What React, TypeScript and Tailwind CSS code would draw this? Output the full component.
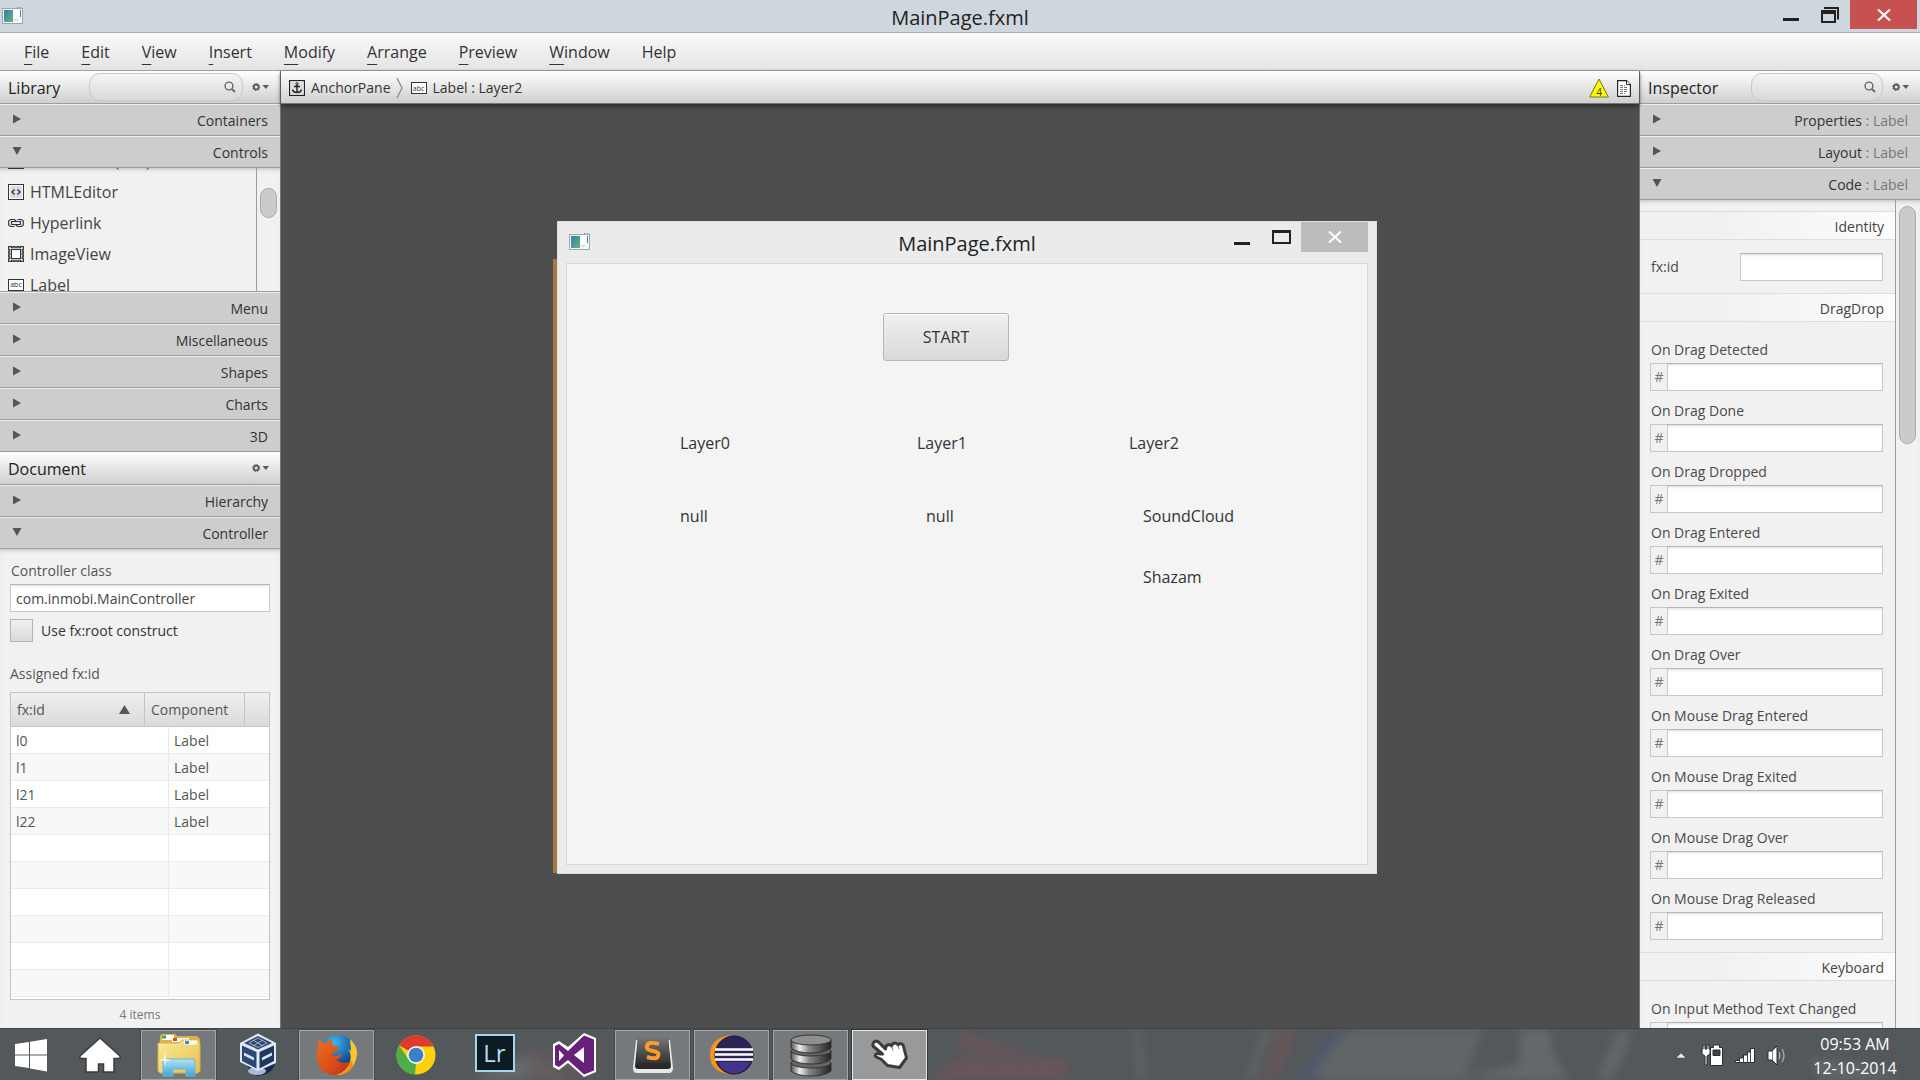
import type { ReactNode } from "react";

function AppIcon() {
  return (
    <svg width="21" height="17" viewBox="0 0 21 17" aria-hidden="true">
      <defs>
        <linearGradient id="appPane" x1="0" y1="0" x2="1" y2="1">
          <stop offset="0" stopColor="#3d7ab0" />
          <stop offset="1" stopColor="#5cb977" />
        </linearGradient>
      </defs>
      <rect x="0.5" y="1.5" width="20" height="15" fill="#f4f6f7" stroke="#9aa5ad" />
      <rect x="2" y="3" width="9" height="12" fill="url(#appPane)" />
      <rect x="12" y="3" width="5" height="8" fill="#fff" />
      <rect x="12" y="12" width="4" height="2" fill="#dde2e5" />
      <rect x="18" y="3" width="1" height="7" fill="#3d8fa5" />
      <path d="M15 0.5h1.5M18 0.5h1.5" stroke="#8b969e" />
    </svg>
  );
}

function SearchIcon() {
  return (
    <svg width="12" height="12" viewBox="0 0 12 12" fill="none" stroke="#666" strokeWidth="1.4" aria-hidden="true">
      <circle cx="5" cy="5" r="3.9" />
      <path d="M7.8 7.8L11 11" strokeWidth="1.8" />
    </svg>
  );
}

function GearMenu({ label }: { label: string }) {
  return (
    <button type="button" aria-label={label} className="flex h-4 w-[17px] shrink-0 items-center">
      <svg width="17" height="10" viewBox="0 0 17 10" aria-hidden="true">
        <circle cx="4.2" cy="5" r="2.4" fill="none" stroke="#5a5a5a" strokeWidth="1.8" />
        <circle cx="4.2" cy="5" r="3.6" fill="none" stroke="#5a5a5a" strokeWidth="1" strokeDasharray="1.4 1.43" />
        <path d="M10.5 3h6.5l-3.2 4z" fill="#5a5a5a" />
      </svg>
    </button>
  );
}

function HtmlIcon() {
  return (
    <svg width="16" height="16" viewBox="0 0 16 16" fill="none" aria-hidden="true">
      <rect x="0.5" y="0.5" width="15" height="15" fill="#fff" stroke="#333" />
      <rect x="2" y="2" width="12" height="12" fill="#dcdcdc" />
      <path d="M6.5 5.5L4 8l2.500 2.500M9.500 5.500L12 8l-2.500 2.500" stroke="#333" strokeWidth="1.300" />
    </svg>
  );
}

function LinkIcon() {
  return (
    <svg width="16" height="16" viewBox="0 0 16 16" fill="none" stroke="#333" strokeWidth="1.200" aria-hidden="true">
      <path d="M6.500 11.500H2.500L.7 10V6l1.800-1.500h4L8 6M9.500 4.500h4L15.300 6v4l-1.800 1.500h-4L8 10" fill="#fff" />
      <rect x="3.500" y="6.500" width="9" height="3" fill="#fff" />
    </svg>
  );
}

function ImageIcon() {
  return (
    <svg width="16" height="16" viewBox="0 0 16 16" fill="none" stroke="#333" aria-hidden="true">
      <path
        d="M.6.6h3v1.200h1.600V.6h1.900v1.200h1.800V.6h1.900v1.200h1.600V.6h3v3h-1.200v1.600h1.200v1.900h-1.200v1.800h1.200v1.900h-1.200v1.600h1.200v3h-3v-1.200h-1.600v1.200H8.900v-1.200H7.100v1.200H5.200v-1.200H3.600v1.200h-3v-3h1.200v-1.600H.6V8.900h1.200V7.100H.6V5.200h1.200V3.600H.6z"
        strokeWidth="1.100"
      />
      <rect x="3.500" y="3.500" width="9" height="9" fill="#fff" />
    </svg>
  );
}

function AbcIcon() {
  return (
    <span
      aria-hidden="true"
      className="flex h-3 w-4 shrink-0 items-center justify-center border border-[#333] bg-white text-[7px] leading-none text-[#333]"
    >
      abc
    </span>
  );
}

function AnchorIcon() {
  return (
    <svg width="16" height="16" viewBox="0 0 16 16" fill="none" stroke="#222" aria-hidden="true">
      <rect x="0.600" y="0.600" width="14.800" height="14.800" fill="#fff" strokeWidth="1.200" />
      <rect x="2" y="2" width="12" height="12" fill="#ddd" stroke="none" />
      <circle cx="8" cy="3.800" r="1.100" />
      <path d="M8 5v7.500M5 6.500h6M3.500 9.500c.5 2 2.500 3 4.500 3s4-1 4.500-3" strokeWidth="1.400" />
    </svg>
  );
}

function Arrow({ open }: { open?: boolean }) {
  return (
    <svg width="10" height="10" viewBox="0 0 10 10" fill="#555" aria-hidden="true" className="mb-1">
      {open ? <path d="M0.500 1h9L5 9z" /> : <path d="M1 .5L9 5 1 9.500z" />}
    </svg>
  );
}

function Section({ name, suffix, open }: { name: string; suffix?: string; open?: boolean }) {
  return (
    <button
      type="button"
      aria-expanded={!!open}
      className="flex h-8 w-full shrink-0 items-center justify-between border-t border-b border-t-[#ededed] border-b-[#9d9d9d] bg-[#cdcdcd] pt-[2px] pr-3 pl-3 text-sm text-[#333]"
    >
      <Arrow open={open} />
      <span>
        {name}
        {suffix && <span className="text-[#777]"> : {suffix}</span>}
      </span>
    </button>
  );
}

function PanelHeader({ title, search }: { title: string; search?: string }) {
  return (
    <div className="flex h-[33px] w-full shrink-0 items-center justify-between border-b border-[#9d9d9d] bg-linear-to-b from-white to-[#cfcfcf] pr-[11px] pl-2">
      <h2 className="pt-[2px] text-base text-[#222]">{title}</h2>
      <div className="flex items-center gap-[9px]">
        {search && (
          <label
            className={`flex h-7 items-center rounded-[11px] border border-[#c9c9c9] bg-linear-to-b from-[#f4f4f4] to-[#d9d9d9] pr-[6px] ${search}`}
          >
            <input type="text" aria-label={`Search ${title}`} className="w-full min-w-0 flex-1 bg-transparent px-3 text-sm outline-none" />
            <SearchIcon />
          </label>
        )}
        <GearMenu label={`${title} options`} />
      </div>
    </div>
  );
}

const field =
  "h-7 min-w-0 border border-[#c8c8c8] border-t-[#b5b5b5] bg-white px-[5px] text-sm text-[#444] shadow-[inset_0_3px_3px_-2px_#ddd] outline-none";

function LibraryItem({ name, icon }: { name: string; icon: ReactNode }) {
  return (
    <li className="flex h-[31px] shrink-0 items-center gap-[6px]">
      {icon}
      <span>{name}</span>
    </li>
  );
}

function LeftPanel() {
  const rows = ["l0", "l1", "l21", "l22", "", "", "", "", "", ""];
  return (
    <aside className="flex w-[281px] shrink-0 flex-col border-r border-[#777] bg-[#f1f1f1]">
      <PanelHeader title="Library" search="w-[154px]" />
      <Section name="Containers" />
      <Section name="Controls" open />
      <div className="flex h-[124px] shrink-0 overflow-hidden border-b border-[#9d9d9d] shadow-[inset_0_4px_4px_-3px_#bbb]">
        <ul className="-mt-[23px] flex flex-1 flex-col pl-2 text-base text-[#444]">
          <LibraryItem name="DatePicker  (FX8)" icon={<HtmlIcon />} />
          <LibraryItem name="HTMLEditor" icon={<HtmlIcon />} />
          <LibraryItem name="Hyperlink" icon={<LinkIcon />} />
          <LibraryItem name="ImageView" icon={<ImageIcon />} />
          <LibraryItem name="Label" icon={<AbcIcon />} />
        </ul>
        <div className="w-6 border-l border-[#9d9d9d] pt-5 pl-[3px]">
          <div className="h-[30px] w-[17px] rounded-full border border-[#aaa] bg-[#cbcbcb]" />
        </div>
      </div>
      <Section name="Menu" />
      <Section name="Miscellaneous" />
      <Section name="Shapes" />
      <Section name="Charts" />
      <Section name="3D" />
      <PanelHeader title="Document" />
      <Section name="Hierarchy" />
      <Section name="Controller" open />
      <div className="flex min-h-0 flex-1 flex-col px-[10px] pt-2 text-sm text-[#555] shadow-[inset_0_4px_4px_-3px_#bbb]">
        <label htmlFor="controller" className="pl-px leading-[27px]">
          Controller class
        </label>
        <input id="controller" type="text" defaultValue="com.inmobi.MainController" className={field} />
        <label className="mt-[7px] flex items-center gap-2 text-[#333]">
          <input
            type="checkbox"
            className="h-[23px] w-[23px] appearance-none border border-[#b5b5b5] bg-linear-to-b from-[#f0f0f0] to-[#dadada]"
          />
          Use fx:root construct
        </label>
        <h3 id="assigned" className="mt-5 leading-[23px]">
          Assigned fx:id
        </h3>
        <div className="mt-[7px] min-h-0 flex-1 overflow-hidden border border-[#c4c4c4] bg-white">
          <table aria-labelledby="assigned" className="w-full table-fixed border-separate border-spacing-0">
            <colgroup>
              <col className="w-[134px]" />
              <col className="w-6" />
              <col className="w-[76px]" />
              <col />
            </colgroup>
            <thead>
              <tr className="h-[34px] bg-linear-to-b from-[#f0f0f0] to-[#d9d9d9] text-left">
                <th scope="col" className="border-r border-b border-[#c4c4c4] pr-[14px] pl-[6px] font-normal">
                  <span className="flex items-center justify-between">
                    fx:id
                    <svg width="11" height="9" viewBox="0 0 11 9" fill="#555" aria-hidden="true">
                      <path d="M5.500 0L11 9H0z" />
                    </svg>
                  </span>
                </th>
                <th scope="col" colSpan={2} className="border-r border-b border-[#c4c4c4] pl-[6px] font-normal">
                  Component
                </th>
                <td className="border-b border-[#c4c4c4]" />
              </tr>
            </thead>
            <tbody>
              {rows.map((id, i) => (
                <tr key={i} className="h-[27px] odd:bg-white even:bg-[#f8f8f8]">
                  <td colSpan={2} className="border-r border-b border-[#ebebeb] pt-[2px] pl-[5px] leading-6">
                    {id}
                  </td>
                  <td colSpan={2} className="border-b border-[#ebebeb] pt-[2px] pl-[5px] leading-6">
                    {id && "Label"}
                  </td>
                </tr>
              ))}
            </tbody>
          </table>
        </div>
        <p className="flex h-[28px] items-center justify-center pt-[2px] text-xs text-[#777]">4 items</p>
      </div>
    </aside>
  );
}

function GroupTitle({ children }: { children: ReactNode }) {
  return (
    <h3 className="flex h-[29px] shrink-0 items-center justify-end border-t border-b border-[#dedede] bg-linear-to-r from-[#f1f1f1] from-30% to-[#fcfcfc] pt-[2px] pr-[11px] text-sm text-[#444]">
      {children}
    </h3>
  );
}

function HandlerField({ name }: { name: string }) {
  return (
    <label className="flex h-[61px] shrink-0 flex-col pr-3 pl-[10px] text-sm leading-[26px] text-[#4a4a4a]">
      <span className="h-[26px] pl-px">{name}</span>
      <span className="flex">
        <span className="flex h-7 w-[17px] items-center justify-center border border-r-0 border-[#c8c8c8] text-[#777]">#</span>
        <input type="text" className={`${field} flex-1`} />
      </span>
    </label>
  );
}

function Inspector() {
  const handlers = [
    "On Drag Detected",
    "On Drag Done",
    "On Drag Dropped",
    "On Drag Entered",
    "On Drag Exited",
    "On Drag Over",
    "On Mouse Drag Entered",
    "On Mouse Drag Exited",
    "On Mouse Drag Over",
    "On Mouse Drag Released",
  ];
  return (
    <aside className="flex w-[281px] shrink-0 flex-col border-l border-[#777] bg-[#f1f1f1]">
      <PanelHeader title="Inspector" search="w-[132px]" />
      <Section name="Properties" suffix="Label" />
      <Section name="Layout" suffix="Label" />
      <Section name="Code" suffix="Label" open />
      <div className="flex min-h-0 flex-1 shadow-[inset_0_4px_4px_-3px_#bbb]">
        <div className="flex flex-1 flex-col overflow-hidden pt-[11px]">
          <GroupTitle>Identity</GroupTitle>
          <label className="flex h-[53px] shrink-0 items-center justify-between pr-3 pl-[11px] text-sm text-[#4a4a4a]">
            fx:id
            <input type="text" className={`${field} w-[143px]`} />
          </label>
          <GroupTitle>DragDrop</GroupTitle>
          <div className="flex shrink-0 flex-col pt-[15px]">
            {handlers.map((h) => (
              <HandlerField key={h} name={h} />
            ))}
          </div>
          <div className="h-[5px] shrink-0" />
          <GroupTitle>Keyboard</GroupTitle>
          <div className="h-[15px] shrink-0" />
          <HandlerField name="On Input Method Text Changed" />
        </div>
        <div className="w-[25px] border-l border-[#9d9d9d] pt-[6px] pl-[3px]">
          <div className="h-[238px] w-[17px] rounded-full border border-[#aaa] bg-[#cbcbcb]" />
        </div>
      </div>
    </aside>
  );
}

function Preview() {
  // Nodes of the previewed pane, placed on its free canvas.
  return (
    <section className="absolute top-[117px] left-[276px] flex h-[653px] w-[820px] flex-col border border-[#dedede] bg-[#ebebeb] px-2 pb-2">
      <header className="grid h-[41px] grid-cols-[1fr_auto_1fr]">
        <div className="pt-[11px] pl-[3px]">
          <AppIcon />
        </div>
        <h1 className="pt-2 text-xl text-[#222]">MainPage.fxml</h1>
        <div className="flex h-[30px] justify-end">
          <button type="button" aria-label="Minimize" className="flex w-[38px] items-end justify-center pb-[7px]">
            <span className="h-[3px] w-4 bg-[#222]" />
          </button>
          <button type="button" aria-label="Maximize" className="flex w-10 items-center justify-center">
            <span className="h-[14px] w-[19px] border-2 border-t-3 border-[#222]" />
          </button>
          <button type="button" aria-label="Close" className="flex w-[67px] items-center justify-center bg-[#bcbcbc]">
            <svg width="14" height="12" viewBox="0 0 14 12" stroke="#fff" strokeWidth="2" aria-hidden="true">
              <path d="M1 .5l12 11M13 .5L1 11.500" />
            </svg>
          </button>
        </div>
      </header>
      <div className="relative flex-1 border border-[#d9d9d9] bg-[#f4f4f4] text-base leading-6 text-[#333]">
        <button
          type="button"
          className="absolute top-[49px] left-[316px] h-[48px] w-[126px] rounded-[3px] border border-[#b5b5b5] bg-linear-to-b from-[#f0f0f0] to-[#d9d9d9] shadow-[inset_0_1px_0_#fff]"
        >
          START
        </button>
        <span className="absolute top-[167px] left-[113px]">Layer0</span>
        <span className="absolute top-[167px] left-[350px]">Layer1</span>
        <span className="absolute top-[167px] left-[562px]">Layer2</span>
        <span className="absolute top-[240px] left-[113px]">null</span>
        <span className="absolute top-[240px] left-[359px]">null</span>
        <span className="absolute top-[240px] left-[576px]">SoundCloud</span>
        <span className="absolute top-[301px] left-[576px]">Shazam</span>
      </div>
    </section>
  );
}

function Editor() {
  return (
    <main className="flex min-w-0 flex-1 flex-col">
      <nav
        aria-label="Selection path"
        className="z-10 flex h-[33px] shrink-0 items-center border-b border-[#777] bg-linear-to-b from-white to-[#cfcfcf] px-2 pt-[2px] text-sm text-[#333] shadow-[0_2px_4px_#2a2a2a]"
      >
        <AnchorIcon />
        <a href="#anchor" className="ml-[6px]">
          AnchorPane
        </a>
        <svg width="8" height="20" viewBox="0 0 8 20" fill="none" stroke="#888" className="ml-[5px]" aria-hidden="true">
          <path d="M1 0l5 10-5 10" strokeWidth="1.200" />
        </svg>
        <span className="mr-[6px] ml-[7px]">
          <AbcIcon />
        </span>
        <a href="#label">Label : Layer2</a>
        <button type="button" aria-label="4 warnings" className="ml-auto">
          <svg width="20" height="20" viewBox="0 0 20 20" aria-hidden="true">
            <path d="M10 1l9.400 18H.6z" fill="#ff0" stroke="#77701c" />
            <text x="10" y="17.500" fontSize="10" textAnchor="middle" fill="#333" fontFamily="Open Sans, sans-serif">
              4
            </text>
          </svg>
        </button>
        <button type="button" aria-label="Style sheets" className="ml-2">
          <svg width="14" height="17" viewBox="0 0 14 17" fill="#fff" stroke="#222" aria-hidden="true">
            <path d="M.6.6h9l3.800 3.800v12H.6z" strokeWidth="1.200" />
            <path d="M9.500.6v4h4" />
            <path d="M3 5.500h5M3 7.500h8M3 9.500h8M3 11.500h8M3 13.500h5" stroke="#777" strokeDasharray="3 1" />
          </svg>
        </button>
      </nav>
      <div className="relative flex-1 overflow-hidden bg-[repeating-conic-gradient(#494949_0_25%,#525252_0_50%)] bg-[length:4px_4px]">
        <div className="absolute top-[155px] left-[272px] h-[614px] w-1 bg-[#a27c3c]" />
        <Preview />
      </div>
    </main>
  );
}

function WindowsLogo() {
  return (
    <svg width="34" height="34" viewBox="0 0 34 34" fill="#fff" aria-hidden="true">
      <path d="M1 6l14-2v12.500H1zM16 3.800L33 1v15.500H16zM1 17.500h14V30L1 28zM16 17.500h17V33.500L16 30.500z" />
    </svg>
  );
}

function HomeIcon() {
  return (
    <svg width="44" height="38" viewBox="0 0 44 38" aria-hidden="true">
      <path d="M22 2L42 20v2.500h-6V36H25.500v-8h-5v8H8V22.500H2V20z" fill="#fff" stroke="#3a3d3f" strokeWidth="1.500" />
    </svg>
  );
}

function FolderIcon() {
  return (
    <svg width="46" height="44" viewBox="0 0 46 44" aria-hidden="true">
      <defs>
        <linearGradient id="fold" x1="0" y1="0" x2="1" y2="1">
          <stop offset="0" stopColor="#fbeb9c" />
          <stop offset="1" stopColor="#e4bf4c" />
        </linearGradient>
        <linearGradient id="stand" x1="0" y1="0" x2="0" y2="1">
          <stop offset="0" stopColor="#b5e3f3" />
          <stop offset="1" stopColor="#3fa5d8" />
        </linearGradient>
      </defs>
      <path d="M4 3l2-2h13l2 2h20l3 3v33H3z" fill="#dcb44e" />
      <path d="M6 2h12v5H6zM16 5h17v4H16z" fill="#fff" />
      <path d="M6 2.500h4v3H6z" fill="#32a852" />
      <path d="M17 5h4v3h-4z" fill="#d84a20" />
      <path d="M2 10h21l3-3h17l1 4v27l-2 2H4l-2-2z" fill="url(#fold)" stroke="#d6b04a" />
      <path d="M28 7.500h13v4H28z" fill="#fff" />
      <path d="M29 8h4v3h-4z" fill="#2d8fc9" />
      <path d="M7 43V29q0-3 3-3h26q3 0 3 3v14h-9v-7H17v7z" fill="url(#stand)" stroke="#6bb7d8" />
      <path d="M9 19l1 7 6 1-6 1-1 6-1-6-6-1 6-1z" fill="#fff" opacity=".8" />
    </svg>
  );
}

function VirtualBoxIcon() {
  return (
    <svg width="38" height="44" viewBox="0 0 38 44" aria-hidden="true">
      <path d="M8 30h28q-2 11-17 13-10-2-11-13z" fill="#1b2659" />
      <ellipse cx="18" cy="38" rx="9" ry="4" fill="#a9b9d6" />
      <path d="M19 0.500L37 10v20L19 38 1 29V10z" fill="#dfe7f2" />
      <path d="M19 3l14 7-14 6.500L5 10z" fill="#31486e" />
      <path d="M19 5l9 5-9 4.500L10 10zM14 7l10 6M24 7l-10 6" fill="none" stroke="#b9c8dd" strokeWidth=".8" />
      <path d="M3 12.500l14.500 6.500v16.500L3 28z" fill="#2b4776" />
      <path d="M35 12.500L20.500 19v16.500L35 28z" fill="#1f3765" />
      <path d="M5 19.500l10 5v3l-10-5zM23 24.500l10-5v3l-10 5z" fill="#d9e4f2" />
    </svg>
  );
}

function FirefoxIcon() {
  return (
    <svg width="42" height="42" viewBox="0 0 42 42" aria-hidden="true">
      <defs>
        <radialGradient id="globe" cx=".4" cy=".2" r=".8">
          <stop offset="0" stopColor="#43b7e8" />
          <stop offset=".6" stopColor="#145ca5" />
          <stop offset="1" stopColor="#0b2457" />
        </radialGradient>
        <linearGradient id="fox" x1="0" y1="0" x2="1" y2="1">
          <stop offset="0" stopColor="#e8701c" />
          <stop offset=".6" stopColor="#dc4a16" />
          <stop offset="1" stopColor="#b92c10" />
        </linearGradient>
      </defs>
      <circle cx="22" cy="20" r="19" fill="url(#globe)" />
      <path d="M34 5q10 9 6 21-5 15-20 15 12-5 14-14 2-7-2-12l3 2z" fill="#f9c530" />
      <path d="M3 6q3 3 6 3 3-3 7-3-1 3 1 6l6 1q0 3-5 5l-2 4q5 0 10-2-1 5-6 6 6 5 15 1-4 11-15 14Q4 41 1 26q-1-9 2-20z" fill="url(#fox)" />
      <path d="M36 26q-3 12-15 15 10 0 16-8z" fill="#ee8b1c" />
    </svg>
  );
}

function ChromeIcon() {
  return (
    <svg width="40" height="40" viewBox="0 0 40 40" aria-hidden="true">
      <circle cx="20" cy="20" r="19.500" fill="#fdd20a" />
      <path d="M20 20L3.100 10.200A19.500 19.500 0 0 1 37.500 11.500H20z" fill="#dd3b2b" />
      <path d="M3.100 10.200L12.500 24.500 20 28.500 19 39.500A19.500 19.500 0 0 1 3.100 10.200z" fill="#4cae49" />
      <circle cx="20" cy="20" r="9" fill="#f2f2f2" />
      <circle cx="20" cy="20" r="7.300" fill="#3b7fc9" />
    </svg>
  );
}

function VisualStudioIcon() {
  return (
    <svg width="44" height="44" viewBox="0 0 44 44" aria-hidden="true">
      <path d="M32 0l12 5v34l-12 5-16-14-9 7-6-3V11l6-3 9 6z" fill="#fff" />
      <path d="M32 2.500l10 4v31l-10 4L16 27l-9 7-4-2V13l4-2 9 7zM32 14l-10 8 10 8zM7 17v11l5-5.500z" fill="#68217a" fillRule="evenodd" />
    </svg>
  );
}

function SublimeIcon() {
  return (
    <svg width="42" height="38" viewBox="0 0 42 38" aria-hidden="true">
      <defs>
        <linearGradient id="key" x1="0" y1="0" x2="0" y2="1">
          <stop offset="0" stopColor="#777" />
          <stop offset="1" stopColor="#333" />
        </linearGradient>
      </defs>
      <path d="M4 4h34l3 28q0 5-4 5H5q-4 0-4-5z" fill="#e9e9e9" />
      <path d="M6 1h30l3 29q0 3-3 3H6q-3 0-3-3z" fill="#2a2a2a" />
      <path d="M6 1h30l2 26H4z" fill="url(#key)" />
      <path d="M27 8q-11-3-12 2-1 4 6 5t5 5q-1 4-11 1" fill="none" stroke="#ff9b2b" strokeWidth="4" />
    </svg>
  );
}

function EclipseIcon() {
  return (
    <svg width="46" height="42" viewBox="0 0 46 42" aria-hidden="true">
      <path d="M23 1Q1 3 1 21t22 19Q9 36 9 21T23 1z" fill="#f7941e" />
      <circle cx="25" cy="21" r="19" fill="#2c2255" stroke="#1a1438" />
      <path d="M9 28a17 17 0 0 0 32 0z" fill="#43348a" />
      <path d="M6 15.500h38M6 20.500h38M6 25.500h38" stroke="#fff" strokeWidth="2.500" />
    </svg>
  );
}

function DatabaseIcon() {
  return (
    <svg width="42" height="44" viewBox="0 0 42 44" aria-hidden="true">
      <defs>
        <linearGradient id="metal">
          <stop offset="0" stopColor="#555" />
          <stop offset=".22" stopColor="#eee" />
          <stop offset=".45" stopColor="#888" />
          <stop offset="1" stopColor="#222" />
        </linearGradient>
      </defs>
      {[29, 17, 6].map((y) => (
        <g key={y} transform={`translate(0 ${y})`} stroke="#333">
          <path d="M1 1v8q6 5 20 5t20-5V1z" fill="url(#metal)" />
          <ellipse cx="21" cy="1" rx="20" ry="5" fill={y === 6 ? "#8f8f8f" : "#666"} />
        </g>
      ))}
    </svg>
  );
}

function HandIcon() {
  return (
    <svg width="38" height="32" viewBox="0 0 38 32" aria-hidden="true">
      <path
        d="M3 3q3-2 5 .5l6.500 6.500q0-4 3-4.500 2 0 3 1.500 1-3 3.500-3 2 0 3 1.800 2-1.800 4-.8 1.500 1 1.700 3l2.800 11-7 9.500-12-2-6-6-6-3q-1-4 5-2.500h2L2.500 7.500Q1 5 3 3z"
        fill="#fff"
        stroke="#3b3b3b"
        strokeWidth="3"
        strokeLinejoin="round"
      />
      <path d="M20.500 7.500l1.500 4M27 6.500l1 3.500" stroke="#777" strokeWidth="1" />
    </svg>
  );
}

function TaskButton({ label, state, children }: { label: string; state?: "open" | "active"; children: ReactNode }) {
  const look =
    state === "active"
      ? "border-[#e6e6e6] bg-[#9b9d9e]/95 outline outline-[#33373a]"
      : state === "open"
        ? "border-[#a2a5a7] bg-white/20 outline outline-[#43484b]"
        : "border-transparent";
  return (
    <button type="button" aria-label={label} className={`flex h-[50px] w-[75px] shrink-0 items-center justify-center border ${look}`}>
      {children}
    </button>
  );
}

function Taskbar() {
  return (
    <footer className="relative flex h-[52px] shrink-0 items-center overflow-hidden border-t border-[#404548] bg-[#53585b]">
      <svg
        className="absolute inset-0 h-full w-full opacity-60 blur-[5px]"
        viewBox="0 0 1920 52"
        preserveAspectRatio="none"
        aria-hidden="true"
      >
        <path d="M470 52l60-28 40 28z" fill="#8b8887" opacity=".6" />
        <path d="M520 20h90l-20 32h-60z" fill="#71575c" opacity=".6" />
        <path d="M960 2l75 24-75-4zM930 52q20-26 50-24l90 2-4 22z" fill="#755357" />
        <path d="M1134 0h6l6 52h-8zM1262 0h14q-20 26-20 52h-10z" fill="#6a6e70" />
        <path d="M1278 0h20l-22 52h-16z" fill="#735556" />
        <path d="M1335 0h20q-30 20-40 52h-20z" fill="#525976" />
        <path d="M1355 0h128l-20 52H1315q10-32 40-52z" fill="#6a6f71" />
        <path d="M1455 52l65-16V0h30q0 30 20 52z" fill="#707475" />
        <path d="M1618 0h12q-4 32-20 52h-14zM1810 30l70 10 20 12h-80z" fill="#6d7173" />
      </svg>
      <div className="relative flex w-full items-center">
        <button type="button" aria-label="Start" className="flex w-[62px] shrink-0 items-center justify-center">
          <WindowsLogo />
        </button>
        <nav aria-label="Applications" className="flex items-center gap-1">
          <TaskButton label="Home">
            <HomeIcon />
          </TaskButton>
          <TaskButton label="File Explorer" state="open">
            <FolderIcon />
          </TaskButton>
          <TaskButton label="VirtualBox">
            <VirtualBoxIcon />
          </TaskButton>
          <TaskButton label="Firefox" state="open">
            <FirefoxIcon />
          </TaskButton>
          <TaskButton label="Chrome">
            <ChromeIcon />
          </TaskButton>
          <TaskButton label="Lightroom">
            <span className="mb-1 flex h-[38px] w-10 items-center justify-center border-2 border-[#a9d3ea] bg-[#0d1b22] text-2xl text-[#b5dcf0]">
              Lr
            </span>
          </TaskButton>
          <TaskButton label="Visual Studio">
            <VisualStudioIcon />
          </TaskButton>
          <TaskButton label="Sublime Text" state="open">
            <SublimeIcon />
          </TaskButton>
          <TaskButton label="Eclipse" state="open">
            <EclipseIcon />
          </TaskButton>
          <TaskButton label="Database" state="open">
            <DatabaseIcon />
          </TaskButton>
          <TaskButton label="Scene Builder" state="active">
            <HandIcon />
          </TaskButton>
        </nav>
        <div className="ml-auto flex items-center pr-5">
          <svg width="112" height="24" viewBox="0 0 112 24" aria-hidden="true">
            <path d="M0 15l5-5 5 5z" fill="#e8e8f4" stroke="#3a3d40" strokeWidth=".5" />
            <g stroke="#2a2d2f" strokeWidth="1">
              <path d="M27 2h2v4h2V2h2v4h1v5l-3 2v9h-2v-9l-3-2V6h1z" fill="#fff" />
              <path d="M34.500 4.500h3V2h6v2.500h3v18h-12z" fill="#fff" />
              <path d="M37 7h7v5.500h-7z" fill="#3d4143" />
              <path d="M59.500 19.500v-2h4V15h4v-3h4V9h3V5.500h4v14z" fill="#fff" />
            </g>
            <path d="M63.500 17v3M67.500 15v5M71.500 12v8M74.500 9v11" stroke="#43484b" />
            <path d="M92 8h4l5-5v19l-5-5h-4z" fill="#fff" stroke="#2a2d2f" />
            <path d="M96.500 8v9" stroke="#888" />
            <path d="M103 9q2 3.500 0 7M106 6q4 6.500 0 13" fill="none" stroke="#aeb1b3" strokeWidth="1.200" />
          </svg>
          <time className="ml-[22px] w-[90px] pt-[2px] text-center text-base leading-6 text-white">
            <span className="block">09:53 AM</span>
            <span className="block">12-10-2014</span>
          </time>
        </div>
      </div>
    </footer>
  );
}

export default function App() {
  const menus = ["File", "Edit", "View", "Insert", "Modify", "Arrange", "Preview", "Window", "Help"];
  return (
    <div className="flex h-screen flex-col overflow-hidden bg-[#f1f1f1] font-['Open_Sans',sans-serif]">
      <header className="grid h-[33px] shrink-0 grid-cols-[1fr_auto_1fr] border-b border-[#a9b1b8] bg-[#ced6de]">
        <div className="pt-[7px] pl-[2px]">
          <AppIcon />
        </div>
        <div className="pt-1 text-xl text-[#222]">MainPage.fxml</div>
        <div className="flex h-[29px] justify-end pr-[3px]">
          <button type="button" aria-label="Minimize window" className="flex w-9 items-end justify-center pb-2">
            <span className="h-[3px] w-4 bg-[#222]" />
          </button>
          <button type="button" aria-label="Restore window" className="flex w-[41px] items-center justify-center">
            <svg width="18" height="16" viewBox="0 0 18 16" fill="none" stroke="#222" aria-hidden="true">
              <path d="M3 1h14v11.500" strokeWidth="2" />
              <path d="M1 5v10h13V5z" strokeWidth="2" />
              <path d="M0 5h15" strokeWidth="4" />
            </svg>
          </button>
          <button type="button" aria-label="Close window" className="flex w-[67px] items-center justify-center bg-[#c75050]">
            <svg width="14" height="12" viewBox="0 0 14 12" stroke="#fff" strokeWidth="2.200" aria-hidden="true">
              <path d="M1 .5l12 11M13 .5L1 11.500" />
            </svg>
          </button>
        </div>
      </header>
      <nav
        aria-label="Main menu"
        className="flex h-[38px] shrink-0 items-center gap-8 border-b border-[#a0a0a0] bg-linear-to-b from-[#f9f9f9] to-[#e4e4e4] pl-6 text-base text-[#333]"
      >
        {menus.map((m) => (
          <button type="button" key={m}>
            {m === "Help" ? (
              m
            ) : (
              <>
                <span className="underline decoration-1 underline-offset-[6px]">{m[0]}</span>
                {m.slice(1)}
              </>
            )}
          </button>
        ))}
      </nav>
      <div className="flex min-h-0 flex-1">
        <LeftPanel />
        <Editor />
        <Inspector />
      </div>
      <Taskbar />
    </div>
  );
}
